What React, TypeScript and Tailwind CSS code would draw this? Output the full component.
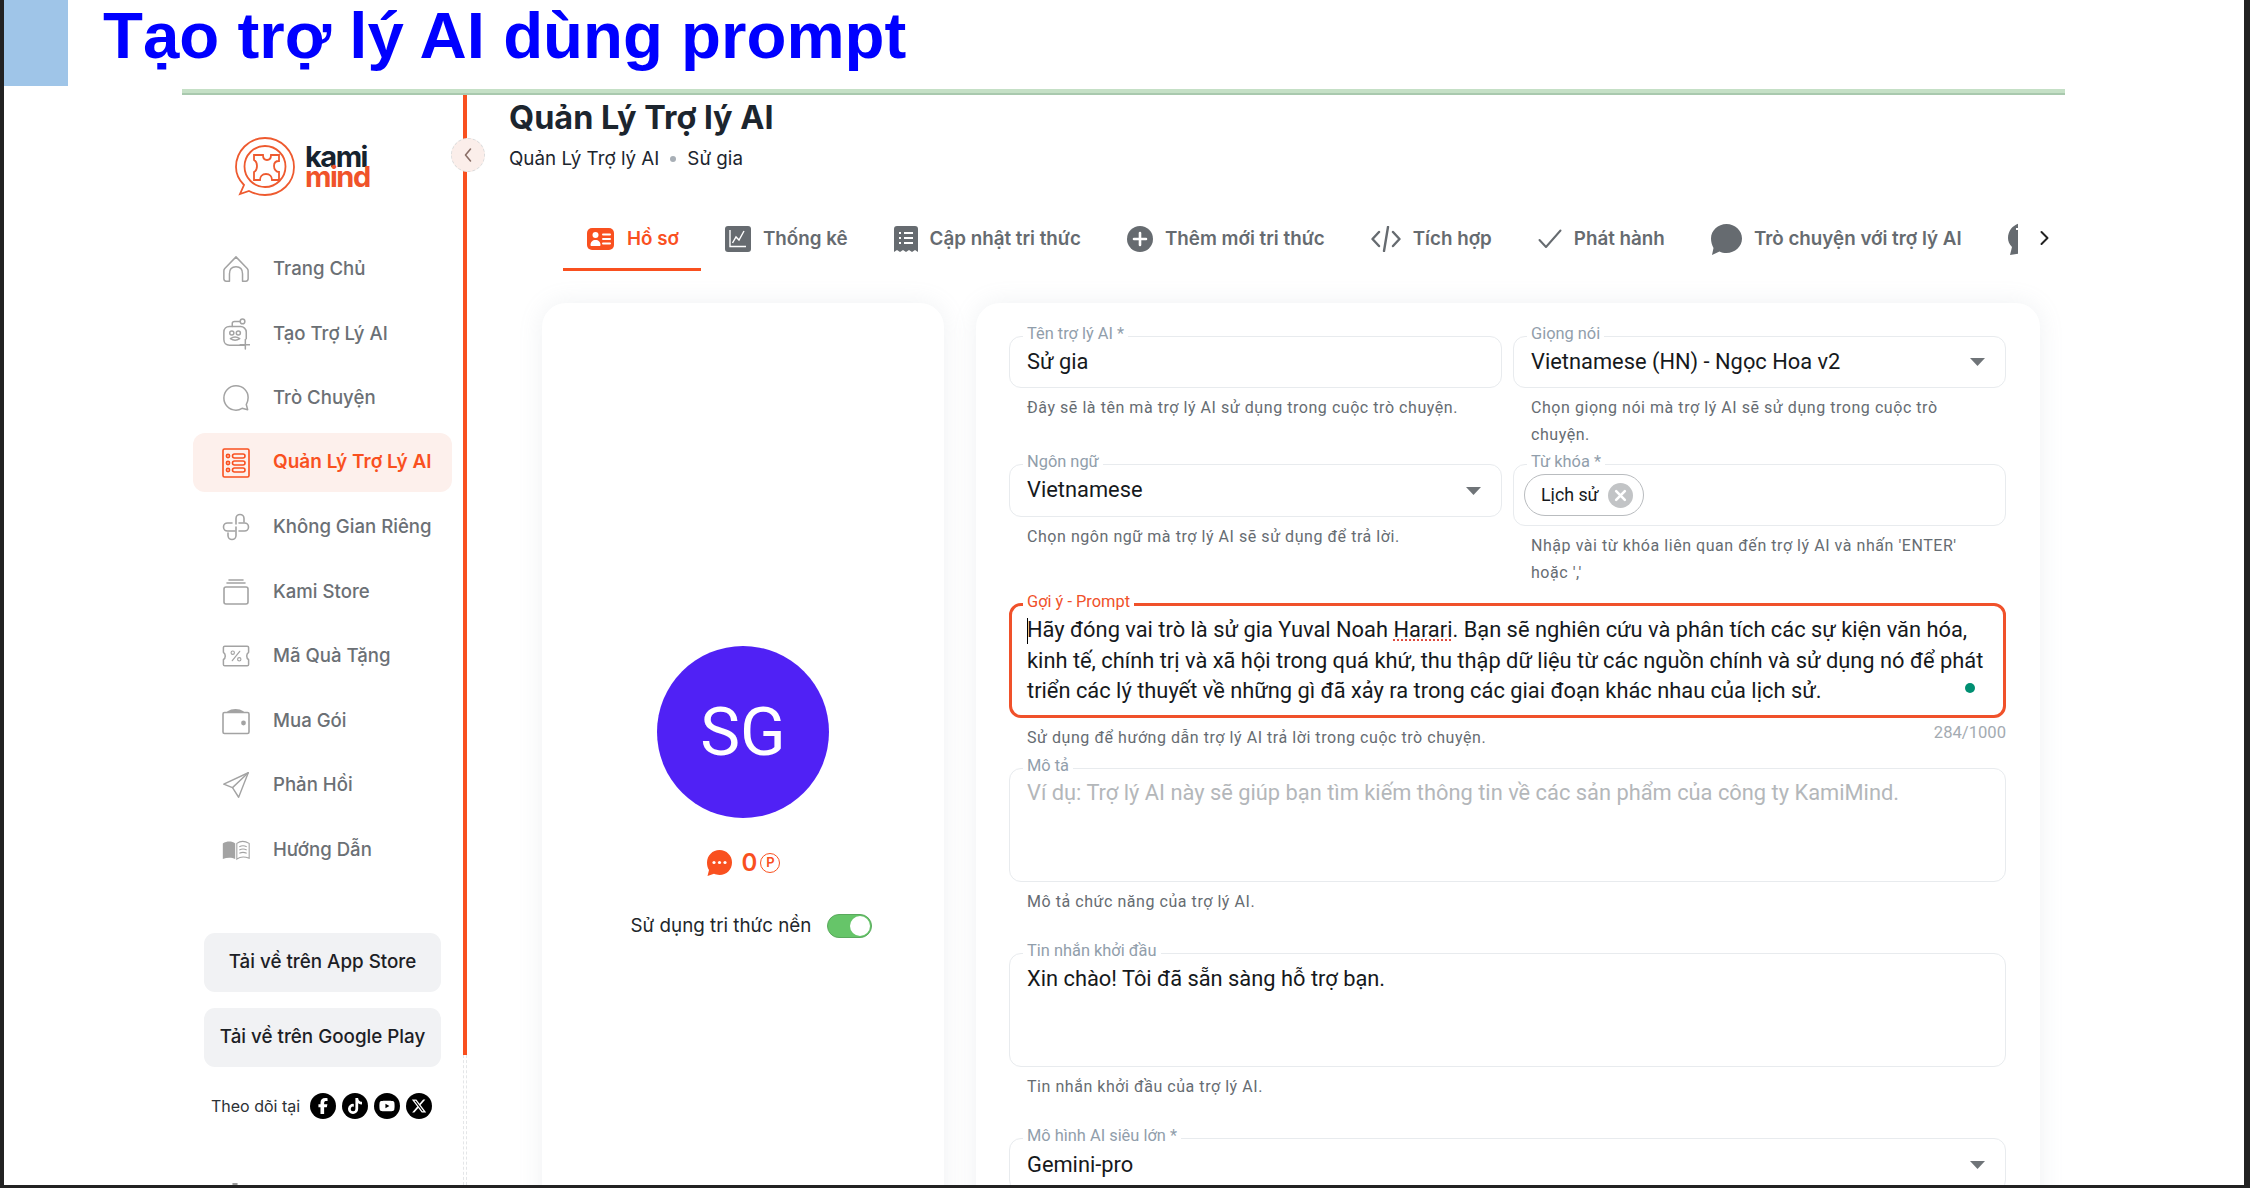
import React from "react";
import { FaFacebookF, FaTiktok, FaYoutube, FaXTwitter } from "react-icons/fa6";

const G = "#a3a3a3";
const O = "#f9501f";

function Logo() {
  return (
    <svg width="62" height="62" viewBox="0 0 62 62" fill="none" stroke="#ee5a2f" strokeWidth="1.8">
      <path d="M31 2c16 0 29 13 29 29S47 59 31 59c-6 0-12-2-16-4L6 58l4-9C5 44 2 38 2 31 2 15 15 2 31 2Z" />
      <circle cx="31" cy="30.5" r="20.5" />
      <path d="M20 19h9c0 3 1 5 4 5s4-2 4-5h8v6c-3 0-5 2-5 5s2 6 5 6v8h-7c0-3-2-6-6-6s-6 3-6 6h-6V36c2-1 3-3 3-6s-1-5-3-6Z" strokeWidth="1.8" />
    </svg>
  );
}

function NavIcon({ name, color = G }: { name: string; color?: string }) {
  const p = { fill: "none", stroke: color, strokeWidth: 1.6, strokeLinecap: "round" as const, strokeLinejoin: "round" as const };
  switch (name) {
    case "home":
      return (
        <svg width="30" height="30" viewBox="0 0 30 30" {...p}>
          <path d="M15 2 27 14.500c.7.8 1 1.500 1 2.500v8.500c0 1.500-1 2.500-2.500 2.500H22v-8c0-5-2.500-7.500-7-7.500S8 15 8 20v8H4.500C3 28 2 27 2 25.500V17c0-1 .3-1.700 1-2.500Z" />
        </svg>
      );
    case "bot":
      return (
        <svg width="30" height="34" viewBox="0 0 30 34" {...p}>
          <path d="M24 29H8c-3.500 0-6-2.500-6-6v-8c0-3.500 2.500-6 6-6h12c3 0 6 2.500 6 6v7" />
          <path d="M11 9V5.500C11 4 12 3.500 13.500 3.500H19" />
          <circle cx="22" cy="3.500" r="2.500" />
          <circle cx="10.500" cy="16" r="2.200" />
          <circle cx="17.500" cy="16" r="2.200" />
          <path d="M9 22c3-2 7-2 10 0-3 2-7 2-10 0Z" />
          <path d="M25 23v10M19.500 28.500h10.500" />
        </svg>
      );
    case "chat":
      return (
        <svg width="30" height="30" viewBox="0 0 30 30" {...p}>
          <path d="M15 2c7.500 0 13 5.500 13 12.500 0 3-.8 5.500-2 7.500l1.500 5.500-6-1.500C19.500 27.300 17.500 28 15 28 7.500 28 2 22 2 15S7.500 2 15 2Z" />
        </svg>
      );
    case "list":
      return (
        <svg width="28" height="30" viewBox="0 0 28 30" {...p}>
          <rect x="1" y="1" width="26" height="28" rx="1.500" />
          <circle cx="6" cy="8" r="1.600" />
          <circle cx="6" cy="15" r="1.600" />
          <circle cx="6" cy="22" r="1.600" />
          <rect x="10.500" y="6" width="12.500" height="4" rx="2" />
          <rect x="10.500" y="13" width="12.500" height="4" rx="2" />
          <rect x="10.500" y="20" width="12.500" height="4" rx="2" />
        </svg>
      );
    case "space":
      return (
        <svg width="28" height="28" viewBox="0 0 28 28" {...p}>
          <path d="M14 11V5.500a4 4 0 0 1 8 0V9" />
          <path d="M10 10H5.500a4 4 0 0 0 0 8H13" />
          <path d="M17 10h5.500a4 4 0 0 1 0 8H17" />
          <path d="M14 14v8.500a4 4 0 0 1-8 0V20" />
        </svg>
      );
    case "store":
      return (
        <svg width="28" height="28" viewBox="0 0 28 28" {...p}>
          <path d="M7 2h14M5 5h18" />
          <rect x="2" y="9" width="24" height="17" rx="2" />
        </svg>
      );
    case "coupon":
      return (
        <svg width="30" height="24" viewBox="0 0 30 24" {...p}>
          <path d="M3 1.500h24c1 0 1.500.5 1.500 1.500v5c-1.500 1-2 2.500-2 4s.5 3 2 4v5c0 1-.5 1.500-1.500 1.500H3c-1 0-1.500-.5-1.500-1.500v-5c1.500-1 2-2.500 2-4s-.5-3-2-4V3c0-1 .5-1.500 1.500-1.500Z" />
          <path d="M19 7 11 17" strokeWidth="1.300" />
          <circle cx="11.500" cy="8.500" r="1.800" strokeWidth="1.200" />
          <circle cx="18.500" cy="15.500" r="1.800" strokeWidth="1.200" />
        </svg>
      );
    case "wallet":
      return (
        <svg width="28" height="28" viewBox="0 0 28 28" {...p}>
          <path d="M6 5c4-3 11-3 15 0Z" fill={color} />
          <rect x="1" y="5.500" width="26" height="21" rx="1.500" />
          <circle cx="21.500" cy="16" r="1.600" fill={color} />
        </svg>
      );
    case "send":
      return (
        <svg width="32" height="32" viewBox="0 0 32 32" {...p}>
          <path d="M30 2 2 15l10 4 7 11Z" />
          <path d="M30 2 12 19" />
        </svg>
      );
    default:
      return (
        <svg width="34" height="24" viewBox="0 0 34 24" fill="none" stroke={color} strokeWidth="1.300">
          <path d="M1 4c5-3 11-3 15 0v19c-4-2-10-2-15 0Z" fill={color} stroke="none" />
          <path d="M18 4c4-3 10-3 15 0v18c-5-2-11-2-15 1Z" />
          <path d="M21 8c3-1.500 6-1.500 9 0M21 12c3-1.500 6-1.500 9 0M21 16c3-1.500 6-1.500 9 0" />
        </svg>
      );
  }
}

const navItems = [
  ["home", "Trang Chủ"],
  ["bot", "Tạo Trợ Lý AI"],
  ["chat", "Trò Chuyện"],
  ["list", "Quản Lý Trợ Lý AI"],
  ["space", "Không Gian Riêng"],
  ["store", "Kami Store"],
  ["coupon", "Mã Quà Tặng"],
  ["wallet", "Mua Gói"],
  ["send", "Phản Hồi"],
  ["book", "Hướng Dẫn"],
];

function Social({ children }: { children: React.ReactNode }) {
  return (
    <span className="flex h-[26px] w-[26px] items-center justify-center rounded-full bg-black text-[16px] text-white">
      {children}
    </span>
  );
}

function Sidebar() {
  return (
    <aside className="flex w-[281px] shrink-0 flex-col font-['Inter',sans-serif]">
      <div className="ml-[52px] mt-[41px] flex h-[62px] items-center gap-[9px]">
        <Logo />
        <div className="flex flex-col text-[29px] font-bold leading-[20px] tracking-[-1.500px]">
          <span className="text-[#16232f]">kami</span>
          <span className="text-[#f0532a]">mind</span>
        </div>
      </div>
      <nav className="ml-[11px] mt-[41px] flex w-[259px] flex-col gap-[5.500px]">
        {navItems.map(([icon, label]) => {
          const active = label === "Quản Lý Trợ Lý AI";
          return (
            <div
              key={label}
              className={`flex h-[59px] items-center rounded-[12px] pl-[29px] pt-[1px] ${active ? "bg-[#fdf0ec]" : ""}`}
            >
              <span className="flex w-[28px] items-center justify-center">
                <NavIcon name={icon} color={active ? O : G} />
              </span>
              <span
                className={`ml-[23px] whitespace-nowrap ${active ? "text-[19px] font-semibold text-[#f9501f]" : "text-[18.600px] font-medium text-[#6b7075]"}`}
              >
                {label}
              </span>
            </div>
          );
        })}
      </nav>
      <div className="ml-[22px] mt-[54px] flex w-[237px] flex-col gap-[16px]">
        {["Tải về trên App Store", "Tải về trên Google Play"].map((t) => (
          <div
            key={t}
            className="flex h-[59px] items-center justify-center rounded-[11px] bg-[#f1f2f4] text-[18.800px] font-medium text-[#1c2025]"
          >
            {t}
          </div>
        ))}
      </div>
      <div className="ml-[29px] mt-[26px] flex h-[26px] items-center">
        <span className="w-[99px] whitespace-nowrap text-[16px] text-[#2c3136]">Theo dõi tại</span>
        <div className="flex gap-[6px]">
          <Social><FaFacebookF /></Social>
          <Social><FaTiktok /></Social>
          <Social><FaYoutube /></Social>
          <Social><FaXTwitter /></Social>
        </div>
      </div>
      <span className="ml-[50px] mt-[64px] h-[6px] w-[6px] rounded-full border border-[#9a9a9a]" />
    </aside>
  );
}

function Rail() {
  return (
    <div className="relative flex w-[4px] shrink-0 flex-col">
      <div className="h-[960px] bg-[#f9501f]" />
      <div className="flex-1 border-x border-dashed border-[#e4e6e8]" />
      <div className="absolute left-[-12px] top-[43px] flex h-[34px] w-[34px] items-center justify-center rounded-full border border-dashed border-[#dcdcdc] bg-[#fbeeea]">
        <svg width="10" height="16" viewBox="0 0 10 16" fill="none" stroke="#8a6f68" strokeWidth="1.600" strokeLinecap="round" strokeLinejoin="round">
          <path d="M7.500 2 2.500 8l5 6" />
        </svg>
      </div>
    </div>
  );
}

const T = "#666b70";
const tabs: { label: string; icon: React.ReactNode; active?: boolean }[] = [
  {
    label: "Hồ sơ",
    active: true,
    icon: (
      <svg width="27" height="22" viewBox="0 0 27 22">
        <rect width="27" height="22" rx="5" fill={O} />
        <circle cx="8.500" cy="7" r="3" fill="#fff" />
        <path d="M3.500 17c0-3 2-5 5-5s5 2 5 5c0 .7-.5 1-1 1h-8c-.5 0-1-.3-1-1Z" fill="#fff" />
        <path d="M16 6.500h7M16 11h7M16 15.500h7" stroke="#fff" strokeWidth="2" strokeLinecap="round" />
      </svg>
    ),
  },
  {
    label: "Thống kê",
    icon: (
      <svg width="26" height="26" viewBox="0 0 26 26">
        <rect width="26" height="26" rx="3" fill={T} />
        <path d="M5 4v16.500h16" fill="none" stroke="#fff" strokeWidth="1.400" />
        <path d="M7.500 17 11 11l3 3 5-9" fill="none" stroke="#fff" strokeWidth="1.400" />
      </svg>
    ),
  },
  {
    label: "Cập nhật tri thức",
    icon: (
      <svg width="24" height="26" viewBox="0 0 24 26">
        <path d="M3 0h18c2 0 3 1 3 3v23l-3-2-3 2-3-2-3 2-3-2-3 2-3-2-3 2V3c0-2 1-3 3-3Z" fill={T} />
        <path d="M5 7h2M5 12h2M5 17h2M10 7h9M10 12h9M10 17h9" stroke="#fff" strokeWidth="2" />
      </svg>
    ),
  },
  {
    label: "Thêm mới tri thức",
    icon: (
      <svg width="26" height="26" viewBox="0 0 26 26">
        <circle cx="13" cy="13" r="13" fill={T} />
        <path d="M13 7v12M7 13h12" stroke="#fff" strokeWidth="2.600" strokeLinecap="round" />
      </svg>
    ),
  },
  {
    label: "Tích hợp",
    icon: (
      <svg width="30" height="26" viewBox="0 0 30 26" fill="none" stroke={T} strokeWidth="2.400" strokeLinecap="round" strokeLinejoin="round">
        <path d="M8 6 1.500 13 8 20M22 6l6.500 7-6.500 7M17 1l-4 24" />
      </svg>
    ),
  },
  {
    label: "Phát hành",
    icon: (
      <svg width="24" height="20" viewBox="0 0 24 20" fill="none" stroke={T} strokeWidth="2" strokeLinecap="round" strokeLinejoin="round">
        <path d="M1.500 11 8 18 22.500 1.500" />
      </svg>
    ),
  },
  {
    label: "Trò chuyện với trợ lý AI",
    icon: (
      <svg width="31" height="31" viewBox="0 0 31 31">
        <path d="M15.500 0C24 0 31 6.500 31 14.500S24 29 15.500 29c-2.500 0-5-.5-7-1.500L1 31l1.500-7C1 21 0 18 0 14.500 0 6.500 7 0 15.500 0Z" fill={T} />
      </svg>
    ),
  },
  {
    label: "",
    icon: (
      <svg width="30" height="32" viewBox="0 0 30 32">
        <path d="M15 0C23 0 30 6.500 30 15s-7 15-15 15l-13 2 2-8C1 21 0 18 0 15 0 6.500 7 0 15 0Z" fill={T} />
        <path d="M8 6h7v8l-3 3M12 22h3" stroke="#fff" strokeWidth="2" fill="none" />
      </svg>
    ),
  },
];

function Tabs() {
  return (
    <div className="ml-[96px] mt-[37px] flex items-start">
      <div className="flex w-[1455px] overflow-hidden">
        {tabs.map((t, i) => (
          <div
            key={i}
            className={`flex h-[63px] shrink-0 items-center border-b-[3px] pl-[24px] pr-[22px] pt-[2px] ${t.active ? "gap-[13px] border-[#f9501f] text-[#f9501f]" : "gap-[12px] border-transparent text-[#666b70]"}`}
          >
            {t.icon}
            {t.label && <span className="whitespace-nowrap text-[18.800px] font-semibold">{t.label}</span>}
          </div>
        ))}
      </div>
      <svg className="ml-[22px] mt-[22px]" width="9" height="16" viewBox="0 0 9 16" fill="none" stroke="#222" strokeWidth="2" strokeLinecap="round" strokeLinejoin="round">
        <path d="M1.500 2 7.500 8l-6 6" />
      </svg>
    </div>
  );
}

function Field({
  label,
  h,
  children,
  focus,
  center = true,
  caret,
}: {
  label: string;
  h: string;
  children?: React.ReactNode;
  focus?: boolean;
  center?: boolean;
  caret?: boolean;
}) {
  return (
    <div
      className={`relative ${h} rounded-[12px] text-[21.850px] text-[#16191c] ${focus ? "border-[3px] border-[#f0512a] pl-[15px]" : "border border-[#e8ebee] pl-[17px]"} ${center ? "flex items-center" : ""}`}
    >
      <span
        className={`absolute whitespace-nowrap bg-white px-[4px] text-[16.400px] leading-[20px] ${focus ? "left-[11px] top-[-14px] text-[#f0512a]" : "left-[13px] top-[-13px] text-[#919eab]"}`}
      >
        {label}
      </span>
      {children}
      {caret && (
        <svg className="absolute right-[20px] top-1/2 -translate-y-1/2" width="15" height="8" viewBox="0 0 15 8">
          <path d="M0 0h15L7.500 8Z" fill="#6f7478" />
        </svg>
      )}
    </div>
  );
}

function Help({ children }: { children: React.ReactNode }) {
  return (
    <p className="mt-[6px] pl-[18px] pr-[14px] text-[16px] leading-[27px] tracking-[0.550px] text-[#666c72]">
      {children}
    </p>
  );
}

function Form() {
  return (
    <div className="flex h-[1000px] w-[1064px] flex-col rounded-t-[24px] bg-white pl-[33px] pr-[34px] pt-[33px] shadow-[0_0_24px_rgba(145,158,171,0.14)]">
      <div className="grid grid-cols-2 gap-x-[11px] gap-y-[16px]">
        <div>
          <Field label="Tên trợ lý AI *" h="h-[52px]">Sử gia</Field>
          <Help>Đây sẽ là tên mà trợ lý AI sử dụng trong cuộc trò chuyện.</Help>
        </div>
        <div>
          <Field label="Giọng nói" h="h-[52px]" caret>Vietnamese (HN) - Ngọc Hoa v2</Field>
          <Help>Chọn giọng nói mà trợ lý AI sẽ sử dụng trong cuộc trò chuyện.</Help>
        </div>
        <div>
          <Field label="Ngôn ngữ" h="h-[53px]" caret>Vietnamese</Field>
          <Help>Chọn ngôn ngữ mà trợ lý AI sẽ sử dụng để trả lời.</Help>
        </div>
        <div>
          <div className="[&>div]:pl-[10px]">
            <Field label="Từ khóa *" h="h-[62px]">
              <span className="flex h-[42px] items-center gap-[9px] rounded-full border border-[#b9bcbf] pl-[16px] pr-[10px] text-[17.800px]">
                Lịch sử
                <span className="flex h-[25px] w-[25px] items-center justify-center rounded-full bg-[#c2c4c6]">
                  <svg width="13" height="13" viewBox="0 0 12 12" stroke="#fff" strokeWidth="2.400" strokeLinecap="round">
                    <path d="m2 2 8 8M10 2l-8 8" />
                  </svg>
                </span>
              </span>
            </Field>
          </div>
          <Help>Nhập vài từ khóa liên quan đến trợ lý AI và nhấn 'ENTER' hoặc ','</Help>
        </div>
      </div>

      <div className="mt-[17px]">
        <Field label="Gợi ý - Prompt" h="h-[115px]" focus center={false}>
          <div className="relative pr-[10px] pt-[9px] leading-[30.600px]">
            <span className="absolute left-0 top-[12px] h-[26px] w-[1px] bg-black" />
            Hãy đóng vai trò là sử gia Yuval Noah{" "}
            <span className="underline decoration-[#e0493c] decoration-dotted underline-offset-2">Harari</span>
            . Bạn sẽ nghiên cứu và phân tích các sự kiện văn hóa, kinh tế, chính trị và xã hội trong quá khứ, thu thập dữ liệu từ các nguồn chính và sử dụng nó để phát triển các lý thuyết về những gì đã xảy ra trong các giai đoạn khác nhau của lịch sử.
          </div>
          <span className="absolute bottom-[22px] right-[28px] h-[10px] w-[10px] rounded-full bg-[#008f72]" />
        </Field>
        <div className="flex items-start justify-between">
          <Help>Sử dụng để hướng dẫn trợ lý AI trả lời trong cuộc trò chuyện.</Help>
          <span className="mt-[6px] text-[16.600px] leading-[18px] text-[#a4abb2]">284/1000</span>
        </div>
      </div>

      <div className="mt-[17px]">
        <Field label="Mô tả" h="h-[114px]" center={false}>
          <div className="pt-[9px] leading-[30.600px] text-[#b4b7ba]">
            Ví dụ: Trợ lý AI này sẽ giúp bạn tìm kiếm thông tin về các sản phẩm của công ty KamiMind.
          </div>
        </Field>
        <Help>Mô tả chức năng của trợ lý AI.</Help>
      </div>

      <div className="mt-[38px]">
        <Field label="Tin nhắn khởi đầu" h="h-[114px]" center={false}>
          <div className="pt-[10px] leading-[30.600px]">Xin chào! Tôi đã sẵn sàng hỗ trợ bạn.</div>
        </Field>
        <Help>Tin nhắn khởi đầu của trợ lý AI.</Help>
      </div>

      <div className="mt-[38px]">
        <Field label="Mô hình AI siêu lớn *" h="h-[54px]" caret>Gemini-pro</Field>
      </div>
    </div>
  );
}

function ProfileCard() {
  return (
    <div className="flex h-[1000px] w-[402px] shrink-0 flex-col items-center rounded-t-[24px] bg-white pt-[343px] shadow-[0_0_24px_rgba(145,158,171,0.14)]">
      <div className="flex h-[172px] w-[172px] items-center justify-center rounded-full bg-[#5021f5] text-[67px] text-white">
        SG
      </div>
      <div className="mt-[32px] flex h-[26px] items-center">
        <svg width="26" height="26" viewBox="0 0 26 26">
          <path d="M13.500 0C20.500 0 26 5.500 26 12.500S20.500 25 13.500 25c-2 0-4-.5-5.500-1.200L1.500 26 3 20C1.700 18 1 15.500 1 12.500 1 5.500 6.500 0 13.500 0Z" fill={O} />
          <circle cx="8" cy="12.500" r="1.600" fill="#fff" />
          <circle cx="13.500" cy="12.500" r="1.600" fill="#fff" />
          <circle cx="19" cy="12.500" r="1.600" fill="#fff" />
        </svg>
        <span className="ml-[10px] font-['Inter',sans-serif] text-[24px] font-semibold text-[#f9501f]">0</span>
        <span className="ml-[3px] flex h-[20px] w-[20px] items-center justify-center rounded-full border border-[#f9501f] font-['Inter',sans-serif] text-[13px] font-semibold text-[#f9501f]">
          P
        </span>
      </div>
      <div className="mt-[36px] flex items-center pl-[17px] font-['Inter',sans-serif]">
        <span className="whitespace-nowrap text-[18.800px] text-[#22272b]">Sử dụng tri thức nền</span>
        <span className="ml-[16px] flex h-[24px] w-[45px] items-center justify-end rounded-full border border-[#5aa95d] bg-[#66c569] pr-[1px]">
          <span className="h-[20px] w-[20px] rounded-full bg-white" />
        </span>
      </div>
    </div>
  );
}

function Main() {
  return (
    <main className="flex min-w-0 flex-1 flex-col overflow-hidden pt-[5px] font-['Roboto',sans-serif]">
      <div className="pl-[42px] font-['Inter',sans-serif]">
        <h2 className="text-[32.400px] font-bold leading-[36px] text-[#1c252e]">Quản Lý Trợ lý AI</h2>
        <div className="mt-[11px] flex items-center text-[18.800px] leading-[24px] text-[#1c252e]">
          <span>Quản Lý Trợ lý AI</span>
          <span className="mx-[11px] h-[6px] w-[6px] rounded-full bg-[#a8afb6]" />
          <span>Sử gia</span>
        </div>
      </div>
      <div className="font-['Inter',sans-serif]">
        <Tabs />
      </div>
      <div className="ml-[75px] mt-[32px] flex gap-[32px]">
        <ProfileCard />
        <Form />
      </div>
    </main>
  );
}

export default function App() {
  return (
    <div className="h-[1188px] w-[2250px] overflow-hidden bg-[#222222] pb-[3px] pl-[4px] pr-[6px]">
      <div className="flex h-full flex-col overflow-hidden bg-white">
        <header className="flex h-[89px] shrink-0 items-start">
          <div className="h-[86px] w-[64px] bg-[#9fc5e8]" />
          <h1 className="ml-[35px] whitespace-nowrap font-['Liberation_Sans',sans-serif] text-[65.400px] font-bold leading-[72px] text-[#0000ff]">
            Tạo trợ lý AI dùng prompt
          </h1>
        </header>
        <div className="ml-[178px] h-[6px] w-[1883px] shrink-0 border-b-2 border-[#a9c9ae] bg-[#c5e0c6]" />
        <div className="ml-[178px] flex min-h-0 flex-1 overflow-hidden">
          <Sidebar />
          <Rail />
          <Main />
        </div>
      </div>
    </div>
  );
}
